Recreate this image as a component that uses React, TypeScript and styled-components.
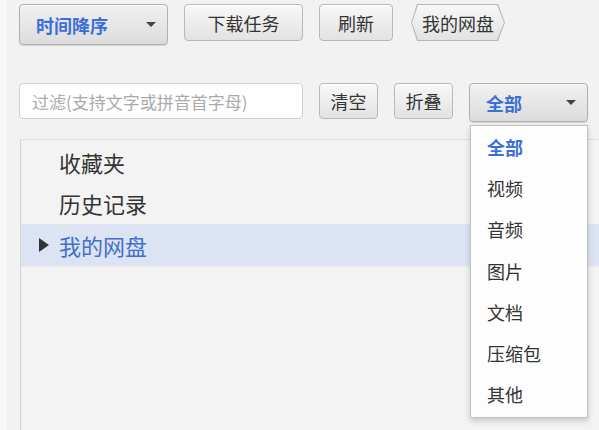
import React from "react";
import styled, { createGlobalStyle } from "styled-components";

const GlobalStyle = createGlobalStyle`
  html, body {
    margin: 0;
    padding: 0;
    background: #f2f2f2;
  }
  body {
    font-family: "Noto Sans CJK SC", "Noto Sans", sans-serif;
    color: #333;
  }
`;

const types = ["全部", "视频", "音频", "图片", "文档", "压缩包", "其他"];
const nodes = [
  { label: "收藏夹" },
  { label: "历史记录" },
  { label: "我的网盘", active: true, arrow: true },
];

const App = () => {
  return (
    <Page>
      <GlobalStyle />
      <Strip />
      <Main>
        <Toolbar>
          <Select $width={149} $height={41}>
            <span>时间降序</span>
            <Caret />
          </Select>
          <Button $width={119}>下载任务</Button>
          <Button $width={74}>刷新</Button>
          <Crumb>
            <CrumbInner>我的网盘</CrumbInner>
          </Crumb>
        </Toolbar>

        <FilterBar>
          <Filter placeholder="过滤(支持文字或拼音首字母)" />
          <Button $width={59} $height={36}>
            清空
          </Button>
          <Button $width={59} $height={36}>
            折叠
          </Button>
          <TypeBox>
            <Select $width={119} $height={39}>
              <span>全部</span>
              <Caret />
            </Select>
            <Menu>
              {types.map((t, i) => (
                <MenuItem key={t} $active={i === 0}>
                  {t}
                </MenuItem>
              ))}
            </Menu>
          </TypeBox>
        </FilterBar>

        <Tree>
          {nodes.map((n) => (
            <Node key={n.label} $active={!!n.active}>
              <Arrow>{n.arrow ? <ArrowShape /> : null}</Arrow>
              {n.label}
            </Node>
          ))}
          <Divider />
        </Tree>
      </Main>
    </Page>
  );
};

export default App;

const Page = styled.div`
  display: flex;
  width: 599px;
  height: 430px;
  overflow: hidden;
  background: #f2f2f2;
`;

const Strip = styled.div`
  width: 7px;
  flex-shrink: 0;
  background: #f8f8f8;
`;

const Main = styled.div`
  flex: 1;
  display: flex;
  flex-direction: column;
  padding-left: 12px;
`;

const Toolbar = styled.div`
  display: flex;
  align-items: flex-start;
  gap: 16px;
  padding-top: 4px;
  height: 83px;
  box-sizing: border-box;
`;

const FilterBar = styled.div`
  display: flex;
  align-items: flex-start;
  gap: 16px;
  height: 56px;
`;

const Button = styled.div<{ $width: number; $height?: number }>`
  box-sizing: border-box;
  width: ${(p) => p.$width}px;
  height: ${(p) => p.$height ?? 37}px;
  display: flex;
  align-items: center;
  justify-content: center;
  border: 1px solid #b9b9b9;
  border-radius: 4px;
  background: linear-gradient(#f8f8f8, #e2e2e2);
  box-shadow: inset 0 1px 0 #fff;
  font-size: 18px;
  color: #333;
`;

const Select = styled(Button)`
  justify-content: space-between;
  padding: 0 11px 0 16px;
  color: #3b6fd6;
  font-weight: 700;
  border-color: #b0b0b0;
  background: linear-gradient(#f1f1f1, #dcdcdc);
  box-shadow: inset 0 1px 0 #fafafa, 0 1px 1px rgba(0, 0, 0, 0.12);
`;

const Caret = styled.i`
  width: 0;
  height: 0;
  border-left: 5px solid transparent;
  border-right: 5px solid transparent;
  border-top: 5px solid #444;
`;

const Crumb = styled.div`
  margin-left: 2px;
  width: 94px;
  height: 37px;
  padding: 1px;
  box-sizing: border-box;
  background: #b7b7b7;
  clip-path: polygon(6px 0, calc(100% - 7px) 0, 100% 50%, calc(100% - 7px) 100%, 6px 100%, 0 50%);
`;

const CrumbInner = styled.div`
  height: 100%;
  display: flex;
  align-items: center;
  justify-content: center;
  font-size: 18px;
  color: #333;
  background: linear-gradient(#f8f8f8, #e2e2e2);
  clip-path: polygon(6px 0, calc(100% - 7px) 0, 100% 50%, calc(100% - 7px) 100%, 6px 100%, 0 50%);
`;

const Filter = styled.input`
  box-sizing: border-box;
  width: 284px;
  height: 36px;
  border: 1px solid #cfcfcf;
  border-radius: 4px;
  background: #fff;
  padding: 0 12px;
  font-family: inherit;
  font-size: 17px;
  outline: none;
  &::placeholder {
    color: #aaa;
  }
`;

const TypeBox = styled.div`
  position: relative;
`;

const Menu = styled.ul`
  position: absolute;
  top: 42px;
  left: 1px;
  z-index: 5;
  box-sizing: border-box;
  width: 118px;
  height: 293px;
  margin: 0;
  padding: 0;
  list-style: none;
  background: #fdfdfd;
  border: 1px solid #c2c2c2;
  box-shadow: 0 3px 6px rgba(0, 0, 0, 0.18);
`;

const MenuItem = styled.li<{ $active: boolean }>`
  height: 41.3px;
  display: flex;
  align-items: center;
  padding-left: 16px;
  font-size: 18px;
  font-weight: ${(p) => (p.$active ? 700 : 400)};
  color: ${(p) => (p.$active ? "#3b6fd6" : "#333")};
`;

const Tree = styled.div`
  flex: 1;
  margin-left: 1px;
  padding-top: 1px;
  border-top: 1px solid #dcdcdc;
  border-left: 1px solid #d4d4d4;
  background: #f3f3f3;
`;

const Node = styled.div<{ $active: boolean }>`
  height: 41.5px;
  display: flex;
  align-items: center;
  font-size: 22px;
  color: ${(p) => (p.$active ? "#4470cc" : "#333")};
  background: ${(p) => (p.$active ? "#dce3f3" : "transparent")};
`;

const Divider = styled.div`
  height: 1px;
  background: #f6e9e9;
`;

const Arrow = styled.span`
  width: 38px;
  display: flex;
  justify-content: flex-end;
  padding-right: 10px;
  box-sizing: border-box;
`;

const ArrowShape = styled.i`
  width: 0;
  height: 0;
  border-top: 7px solid transparent;
  border-bottom: 7px solid transparent;
  border-left: 10px solid #333;
`;
